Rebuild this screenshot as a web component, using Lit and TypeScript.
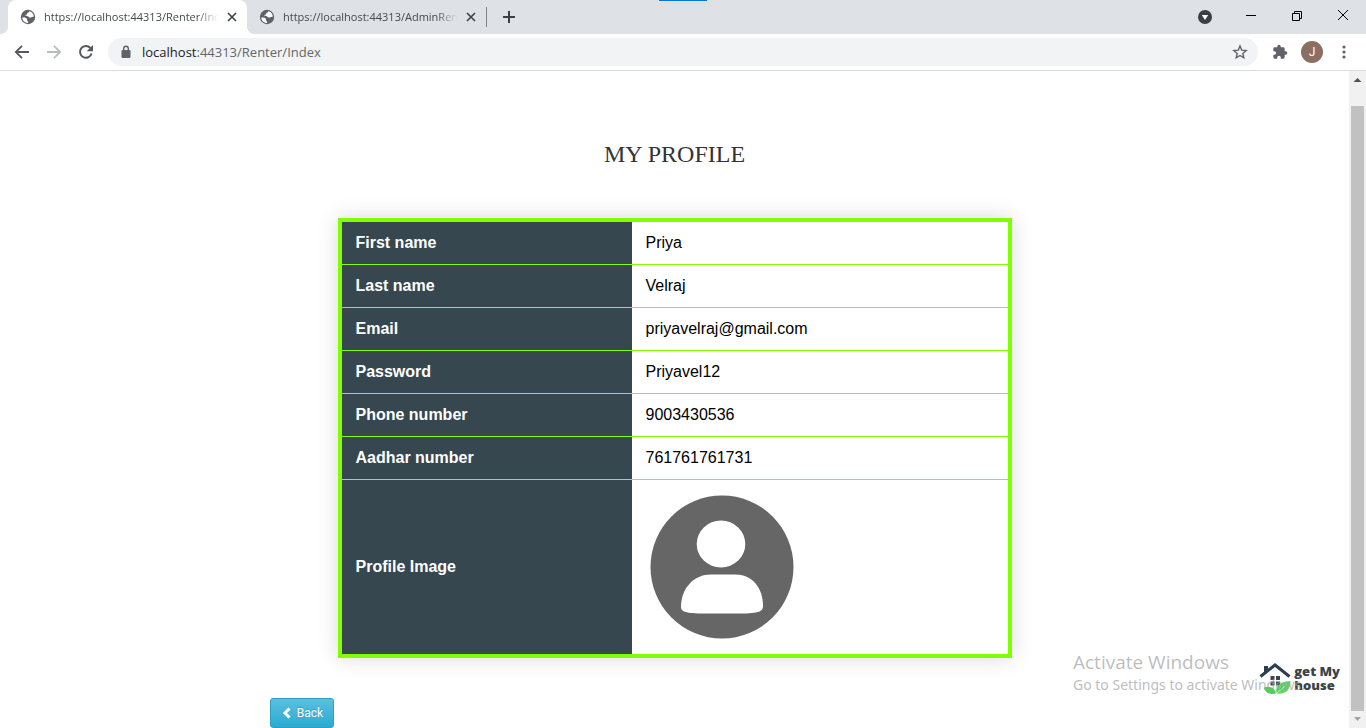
import { LitElement, html, css, svg } from "lit";
import { customElement, property } from "lit/decorators.js";

const globe = svg`<circle cx="8" cy="8" r="7.2" fill="#5f6368"/>
  <path d="M2.200 8.600c2.400-.4 3.900.1 4.500 1 .5.8-.2 1.300.4 1.900.5.5 1.200.6 1 2.600-3.300 0-5.600-2.300-5.900-5.500zM9.200 2.200c-.2 1.500-1.200 1.300-1.800 1.800-.5.5 0 1.200-.7 1.600-.5.4-.9 0-1.200.5-.2.6.4.8 1.400.8 1.700 0 1.700 1.500 2.900 1.700 1.600.2 1.400-1.300 3.900-.9.300-2.600-1.700-4.900-4.500-5.500z" fill="#fff"/>`;

@customElement("browser-tab")
class BrowserTab extends LitElement {
  @property() label = "";
  @property({ type: Boolean, reflect: true }) active = false;

  static styles = css`
    :host {
      display: flex;
      align-items: center;
      position: relative;
      width: 239px;
      height: 34px;
      padding: 0 7px 0 12px;
      box-sizing: border-box;
      color: #45494d;
      font: 11px/34px "Open Sans", "Noto Sans", sans-serif;
    }
    :host([active]) {
      background: #fff;
      border-radius: 8px 8px 0 0;
    }
    :host([active])::before,
    :host([active])::after {
      content: "";
      position: absolute;
      bottom: 0;
      width: 8px;
      height: 8px;
    }
    :host([active])::before {
      right: 100%;
      background: radial-gradient(circle at 0 0, transparent 8px, #fff 8px);
    }
    :host([active])::after {
      left: 100%;
      background: radial-gradient(circle at 100% 0, transparent 8px, #fff 8px);
    }
    .icon { width: 16px; height: 16px; flex: none; }
    .label {
      flex: 1;
      min-width: 0;
      margin-left: 8px;
      overflow: hidden;
      white-space: nowrap;
      mask-image: linear-gradient(to right, #000 88%, transparent);
    }
    .close {
      width: 16px;
      height: 16px;
      margin-left: 6px;
      padding: 0;
      border: 0;
      background: none;
    }
    .close svg { display: block; }
  `;

  render() {
    return html`
      <svg class="icon" viewBox="0 0 16 16">${globe}</svg>
      <span class="label">${this.label}</span>
      <button class="close" aria-label="Close tab">
        <svg width="16" height="16" viewBox="0 0 16 16"><path d="M4 4l8 8M12 4l-8 8" stroke="#3c4043" stroke-width="1.600"/></svg>
      </button>
    `;
  }
}

@customElement("profile-table")
class ProfileTable extends LitElement {
  @property({ attribute: false }) rows: [string, string][] = [];

  static styles = css`
    :host { display: block; }
    .table {
      width: 100%;
      border: 4px solid #80ff00;
      border-collapse: separate;
      border-spacing: 0;
      box-shadow: 0 0 20px rgba(0, 0, 0, 0.15);
      background: #fff;
      color: #000;
      font: 16px/18px "Liberation Sans", Arial, sans-serif;
    }
    th, td {
      padding: 12px 14px;
      border-bottom: 1px solid #80ff00;
      text-align: left;
      vertical-align: middle;
    }
    th {
      width: 262px;
      background: #36474f;
      color: #fff;
      font-weight: 700;
    }
    tr:last-child th, tr:last-child td { border-bottom: 0; }
    .photo { display: block; width: 150px; height: 150px; }
  `;

  render() {
    return html`
      <table class="table">
        <tbody>
          ${this.rows.map(([name, value]) => html`<tr><th scope="row">${name}</th><td>${value}</td></tr>`)}
          <tr>
            <th scope="row">Profile Image</th>
            <td>
              <svg class="photo" viewBox="0 0 150 150" role="img" aria-label="Profile image">
                <circle cx="76" cy="75" r="71.500" fill="#666"/>
                <ellipse cx="75" cy="52" rx="24.300" ry="23.500" fill="#fff"/>
                <path d="M65 82.500h24c17 0 28 13 28 31.500 0 5-3 7.500-24 7.500H59c-20 0-24-2-24-6.500C35 96 48 82.500 65 82.500z" fill="#fff"/>
              </svg>
            </td>
          </tr>
        </tbody>
      </table>
    `;
  }
}

@customElement("app-root")
class AppRoot extends LitElement {
  rows: [string, string][] = [
    ["First name", "Priya"],
    ["Last name", "Velraj"],
    ["Email", "priyavelraj@gmail.com"],
    ["Password", "Priyavel12"],
    ["Phone number", "9003430536"],
    ["Aadhar number", "761761761731"],
  ];

  static styles = css`
    :host {
      display: flex;
      flex-direction: column;
      height: 100vh;
      position: relative;
      overflow: hidden;
      background: #fff;
      font-family: "Open Sans", "Noto Sans", sans-serif;
    }
    button { padding: 0; border: 0; background: none; }
    svg { display: block; }
    .tabs {
      display: flex;
      align-items: center;
      height: 34px;
      flex: none;
      padding-left: 8px;
      background: #dee1e6;
    }
    .divider { width: 1px; height: 20px; margin-right: 14px; background: #808387; }
    .accent {
      position: absolute;
      top: 0;
      left: 50%;
      width: 48px;
      height: 1px;
      margin-left: -24px;
      background: #0078d7;
    }
    .window {
      display: flex;
      align-items: center;
      gap: 30px;
      margin-left: auto;
      padding-right: 15px;
    }
    .toolbar {
      display: flex;
      align-items: center;
      height: 36px;
      flex: none;
      padding: 0 14px;
      border-bottom: 1px solid #d9dbde;
    }
    .nav { display: flex; gap: 16px; }
    .address {
      display: flex;
      align-items: center;
      flex: 1;
      height: 28px;
      margin: 0 14px;
      padding: 0 10px;
      border-radius: 14px;
      background: #f1f3f4;
      color: #63676b;
      font-size: 13px;
      line-height: 28px;
    }
    .url { flex: 1; margin-left: 8px; }
    .host { color: #202124; }
    .tools { display: flex; align-items: center; gap: 13px; }
    .avatar {
      width: 22px;
      height: 22px;
      border-radius: 50%;
      background: #8d6e63;
      color: #fff;
      font: 12px/22px Roboto, sans-serif;
      text-align: center;
    }
    .dots { width: 16px; }
    .view { display: flex; flex: 1; min-height: 0; }
    .page { flex: 1; min-width: 0; overflow: hidden; }
    .title {
      margin: 0;
      padding: 69px 0 50px;
      color: #333;
      font: 400 24px/28px "Liberation Serif", serif;
      text-align: center;
    }
    .profile { width: 50%; max-width: 674px; margin: 0 auto; }
    .back {
      display: inline-flex;
      align-items: center;
      gap: 5px;
      height: 30px;
      margin: 40px 0 0 20%;
      padding: 0 10px;
      border: 1px solid #2f9fc4;
      border-radius: 3px;
      background: linear-gradient(#5bc0de, #2aabd2);
      color: #fff;
      font: 12px/18px Roboto, sans-serif;
      text-shadow: 0 -1px 0 rgba(0, 0, 0, 0.2);
    }
    .scroll {
      display: flex;
      flex-direction: column;
      width: 17px;
      flex: none;
      background: #f1f1f1;
    }
    .track { flex: 1; padding: 18px 2px 0; }
    .thumb { height: 100%; background: #c1c1c1; }
    .watermark {
      position: absolute;
      right: 60px;
      bottom: 33px;
      width: 233px;
      color: rgba(160, 160, 160, 0.7);
      font: 14px/20px "Noto Sans", sans-serif;
      white-space: nowrap;
    }
    .watermark p { margin: 0; }
    .watermark .big { font: 19px/26px "Open Sans", sans-serif; }
    .brand {
      position: absolute;
      right: 26px;
      bottom: 34px;
      display: flex;
      align-items: center;
      gap: 3px;
      color: #3b4347;
      font: 800 13px/14px "Open Sans", sans-serif;
      white-space: nowrap;
    }
  `;

  render() {
    return html`
      <div class="accent"></div>
      <header class="tabs">
        <browser-tab active label="https://localhost:44313/Renter/Index"></browser-tab>
        <browser-tab label="https://localhost:44313/AdminRenter"></browser-tab>
        <span class="divider"></span>
        <button aria-label="New tab">
          <svg width="16" height="16" viewBox="0 0 16 16"><path d="M8 2v12M2 8h12" stroke="#3c4043" stroke-width="2"/></svg>
        </button>
        <div class="window">
          <button aria-label="Search tabs">
            <svg width="16" height="16" viewBox="0 0 16 16"><circle cx="8" cy="8" r="7" fill="#3c4043"/><path d="M4.800 6h6.400L8 11z" fill="#fff"/></svg>
          </button>
          <button aria-label="Minimize">
            <svg width="16" height="16" viewBox="0 0 16 16"><path d="M3 6.500h10" stroke="#000"/></svg>
          </button>
          <button aria-label="Restore">
            <svg width="16" height="16" viewBox="0 0 16 16"><path d="M3.500 4.500h7v7h-7zM5.500 4.500v-2h7v7h-2" fill="none" stroke="#000"/></svg>
          </button>
          <button aria-label="Close window">
            <svg width="16" height="16" viewBox="0 0 16 16"><path d="M3 1l10 10M13 1L3 11" stroke="#000"/></svg>
          </button>
        </div>
      </header>

      <div class="toolbar">
        <nav class="nav">
          <button aria-label="Back">
            <svg width="16" height="16" viewBox="0 0 16 16"><path d="M15 8H2M8 1.800L1.800 8 8 14.200" fill="none" stroke="#55595d" stroke-width="1.800"/></svg>
          </button>
          <button aria-label="Forward">
            <svg width="16" height="16" viewBox="0 0 16 16"><path d="M1 8h13M8 1.800L14.200 8 8 14.200" fill="none" stroke="#b9bbbd" stroke-width="1.800"/></svg>
          </button>
          <button aria-label="Reload">
            <svg width="16" height="16" viewBox="0 0 16 16"><path d="M13.600 9.500A5.900 5.900 0 1 1 12.400 4" fill="none" stroke="#55595d" stroke-width="2"/><path d="M15 1v6.300H8.700z" fill="#55595d"/></svg>
          </button>
        </nav>
        <div class="address">
          <svg width="16" height="16" viewBox="0 0 16 16"><rect x="3.500" y="6" width="9" height="8" rx="1" fill="#5f6368"/><path d="M5.700 6.500v-2a2.300 2.300 0 0 1 4.600 0v2" fill="none" stroke="#5f6368" stroke-width="1.400"/></svg>
          <span class="url"><span class="host">localhost</span>:44313/Renter/Index</span>
          <button aria-label="Bookmark">
            <svg width="16" height="16" viewBox="0 0 16 16"><path d="M8 2l1.700 4.100 4.500.4-3.400 2.900 1 4.400L8 11.500l-3.800 2.300 1-4.400-3.400-2.900 4.500-.4z" fill="none" stroke="#5f6368" stroke-width="1.400"/></svg>
          </button>
        </div>
        <div class="tools">
          <button aria-label="Extensions">
            <svg width="16" height="16" viewBox="0 0 24 24"><path d="M20.500 11H19V7a2 2 0 0 0-2-2h-4V3.500a2.500 2.500 0 0 0-5 0V5H4a2 2 0 0 0-2 2v3.800h1.500a2.700 2.700 0 0 1 0 5.400H2V20a2 2 0 0 0 2 2h3.800v-1.500a2.700 2.700 0 0 1 5.400 0V22H17a2 2 0 0 0 2-2v-4h1.500a2.500 2.500 0 0 0 0-5z" fill="#5f6368"/></svg>
          </button>
          <button class="avatar" aria-label="Account">J</button>
          <button class="dots" aria-label="Menu">
            <svg width="16" height="16" viewBox="0 0 16 16" fill="#5f6368"><circle cx="8" cy="3" r="1.600"/><circle cx="8" cy="8" r="1.600"/><circle cx="8" cy="13" r="1.600"/></svg>
          </button>
        </div>
      </div>

      <div class="view">
        <main class="page">
          <h1 class="title">MY PROFILE</h1>
          <profile-table class="profile" .rows=${this.rows}></profile-table>
          <button class="back">
            <svg width="11" height="12" viewBox="0 0 11 12"><path d="M8.500 1.500L4 6l4.500 4.500" fill="none" stroke="#fff" stroke-width="3"/></svg>
            Back
          </button>
        </main>
        <div class="scroll">
          <svg width="17" height="17" viewBox="0 0 17 17"><path d="M4.500 11L8.500 7l4 4z" fill="#505050"/></svg>
          <div class="track"><div class="thumb"></div></div>
          <svg width="17" height="17" viewBox="0 0 17 17"><path d="M5 6l3.500 4L12 6z" fill="#a3a3a3"/></svg>
        </div>
      </div>

      <div class="brand">
        <svg width="32" height="32" viewBox="0 0 32 32">
          <path d="M1.500 14.500L16 3l14.500 11.500" fill="none" stroke="#2c3e50" stroke-width="3"/>
          <path d="M5 4h4v4l-4 3z" fill="#2c3e50"/>
          <path d="M11.500 14h4v4h-4zM17 14h4v4h-4zM11.500 19.500h4v4h-4zM17 19.500h4v4h-4z" fill="#3f444c"/>
          <path d="M5 25.500c5-2 11 0 12 6-6 1.500-11-.5-12-6z" fill="#4fce58"/>
          <path d="M17.500 31.500c-2-8 5-12.500 14-12.500 0 9-5 13.500-14 12.500z" fill="#59d962"/>
          <path d="M18 31l8-7" stroke="#fff" stroke-width=".6"/>
        </svg>
        <span>get My<br />house</span>
      </div>
      <div class="watermark">
        <p class="big">Activate Windows</p>
        <p>Go to Settings to activate Windows.</p>
      </div>
    `;
  }
}
